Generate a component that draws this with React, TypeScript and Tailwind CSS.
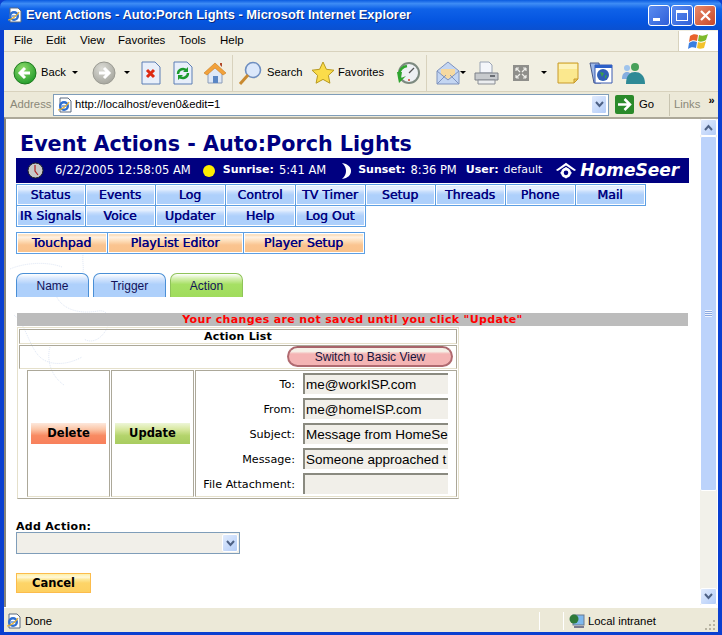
import type { ReactNode } from "react";

const row1 = ["Status", "Events", "Log", "Control", "TV Timer", "Setup", "Threads", "Phone", "Mail"];
const row2 = ["IR Signals", "Voice", "Updater", "Help", "Log Out"];

const fields = [
  { label: "To:", value: "me@workISP.com" },
  { label: "From:", value: "me@homeISP.com" },
  { label: "Subject:", value: "Message from HomeSe" },
  { label: "Message:", value: "Someone approached t" },
  { label: "File Attachment:", value: "" },
];

function IeIcon({ size = 16 }: { size?: number }) {
  return (
    <svg width={size} height={size} viewBox="0 0 16 16" className="shrink-0">
      <path d="M3 1h8l3 3v11H3z" fill="#fff" stroke="#5a6a80" />
      <circle cx="7" cy="9" r="5" fill="#2f6fd0" />
      <circle cx="7" cy="9" r="2.6" fill="#fff" />
      <path d="M4.500 9h5" stroke="#2f6fd0" strokeWidth="1.2" />
      <path d="M1 13c3 0 9-4 11-8" stroke="#e8b030" strokeWidth="1.2" fill="none" />
    </svg>
  );
}

function Caret({ className = "" }: { className?: string }) {
  return <span className={`block shrink-0 w-0 h-0 border-x-[3px] border-x-transparent border-t-[3px] border-t-black ${className}`} />;
}

function RoundArrow({ dir, on }: { dir: "left" | "right"; on: boolean }) {
  const d = dir === "left" ? "M17 12H8M12 7l-5 5 5 5" : "M7 12h9M12 7l5 5-5 5";
  return (
    <svg width="24" height="24" viewBox="0 0 24 24" className="shrink-0">
      <defs>
        <radialGradient id={`ball-${dir}`} cx="40%" cy="30%" r="75%">
          <stop offset="0" stopColor={on ? "#8fdc6a" : "#dcdcd6"} />
          <stop offset="1" stopColor={on ? "#1f9a2a" : "#a4a49c"} />
        </radialGradient>
      </defs>
      <circle cx="12" cy="12" r="11" fill={`url(#ball-${dir})`} stroke={on ? "#1d7a1d" : "#9a9a92"} />
      <path d={d} stroke="#fff" strokeWidth="3" fill="none" />
    </svg>
  );
}

function Stop() {
  return (
    <svg width="20" height="24" viewBox="0 0 20 24" className="shrink-0">
      <path d="M1 1h13l5 5v17H1z" fill="#e8effa" stroke="#5d7fb5" />
      <path d="M6 9l7 7M13 9l-7 7" stroke="#dd2a12" strokeWidth="3" />
    </svg>
  );
}

function Refresh() {
  return (
    <svg width="20" height="24" viewBox="0 0 20 24" className="shrink-0">
      <path d="M1 1h13l5 5v17H1z" fill="#e8effa" stroke="#5d7fb5" />
      <path d="M5 13a5 5 0 0 1 9-3M15 12a5 5 0 0 1-9 3" stroke="#1c9b2e" strokeWidth="2.4" fill="none" />
      <path d="M15 6v5h-5zM5 19v-5h5z" fill="#1c9b2e" />
    </svg>
  );
}

function Home() {
  return (
    <svg width="24" height="24" viewBox="0 0 24 24" className="shrink-0">
      <path d="M5 11l7-7 7 7v11H5z" fill="#dfe8f6" stroke="#8a9cb8" />
      <path d="M1 12L12 2l11 10-3 2-8-7-8 7z" fill="#f2a23a" stroke="#c67a20" strokeWidth=".6" />
      <path d="M10 15h5v7h-5z" fill="#5a86c4" />
      <path d="M17 2h2v4l-2-2z" fill="#b04a2a" />
    </svg>
  );
}

function SearchIcon() {
  return (
    <svg width="24" height="26" viewBox="0 0 24 26" className="shrink-0">
      <circle cx="15" cy="10" r="7.500" fill="#dbe8fb" stroke="#6f8fc0" strokeWidth="1.6" />
      <path d="M10 15L2 24" stroke="#c98a30" strokeWidth="3" />
    </svg>
  );
}

function Star() {
  return (
    <svg width="24" height="24" viewBox="0 0 24 24" className="shrink-0">
      <path d="M12 1l3.400 7.300 7.600.9-5.600 5.200 1.500 7.800L12 18.400 5.100 22.200l1.500-7.800L1 9.200l7.600-.9z" fill="#fbdc4a" stroke="#b89a20" />
    </svg>
  );
}

function History() {
  return (
    <svg width="24" height="24" viewBox="0 0 24 24" className="shrink-0">
      <circle cx="13" cy="12" r="10" fill="#eef1f4" stroke="#7d8a80" strokeWidth="2" />
      <path d="M13 12l5-5" stroke="#555" strokeWidth="1.200" />
      <circle cx="13" cy="19" r="1" fill="#d0402a" />
      <path d="M1 11h5l-1 6 5-2-7 7-1-5z" fill="#2fa52f" />
      <path d="M3 13a10 10 0 0 1 8-8" stroke="#2fa52f" strokeWidth="2.500" fill="none" />
    </svg>
  );
}

function Mail() {
  return (
    <svg width="24" height="24" viewBox="0 0 24 24" className="shrink-0">
      <path d="M1 10L12 1l11 9v13H1z" fill="#c4d6f2" stroke="#7f93be" />
      <path d="M5 8h14v6l-7 4-7-4z" fill="#f6d9a0" />
      <path d="M1 23l9-9M23 23l-9-9M1 10l11 9 11-9" stroke="#7f93be" fill="none" />
    </svg>
  );
}

function Printer() {
  return (
    <svg width="25" height="24" viewBox="0 0 25 24" className="shrink-0">
      <path d="M6 1h9l3 3v8H6z" fill="#f4f6fa" stroke="#9aa4b4" />
      <path d="M1 12h23v7H1z" fill="#c7cacd" stroke="#7c8088" />
      <path d="M4 19h17v4H4z" fill="#eceef0" stroke="#8a8e94" />
      <path d="M16 15h5" stroke="#4a4e54" strokeWidth="1.500" />
    </svg>
  );
}

function Media() {
  return (
    <svg width="16" height="16" viewBox="0 0 16 16" className="shrink-0">
      <path d="M0 0h16v16H0z" fill="#8f8f8b" />
      <path d="M3 3l4 4M13 3L9 7M3 13l4-4M13 13L9 9M3 3h3M3 3v3M13 3h-3M13 3v3M3 13h3M3 13v-3M13 13h-3M13 13v-3" stroke="#eeeeea" strokeWidth="1.200" fill="none" />
    </svg>
  );
}

function Note() {
  return (
    <svg width="22" height="22" viewBox="0 0 22 22" className="shrink-0">
      <path d="M1 1h20v16l-4 4H1z" fill="#fbe88e" stroke="#c89a2a" />
      <path d="M2 2h18v5H2z" fill="#fdf3ba" />
      <path d="M21 17h-4v4z" fill="#e8c860" stroke="#c89a2a" />
    </svg>
  );
}

function Windows() {
  return (
    <svg width="24" height="24" viewBox="0 0 24 24" className="shrink-0">
      <path d="M1 2h9l2 20H5z" fill="#9db8e8" stroke="#4a5a8a" />
      <path d="M6 4h17v18H6z" fill="#fff" stroke="#3a5ab0" />
      <path d="M6 4h17v3H6z" fill="#2c60c8" />
      <circle cx="14" cy="14" r="6" fill="#2f5fb5" />
      <path d="M11 11l4 1-2 4zM16 14l2 1-2 3z" fill="#3aa04a" />
    </svg>
  );
}

function Msn() {
  return (
    <svg width="26" height="24" viewBox="0 0 26 24" className="shrink-0">
      <circle cx="7" cy="7" r="3" fill="#9fc4ec" />
      <path d="M2 18c0-5 2-7 5-7s5 2 5 7z" fill="#86aee0" />
      <circle cx="15" cy="6" r="4" fill="#48a05a" />
      <path d="M6 23c0-9 4-12 9-12s10 3 10 12z" fill="#2f8a96" />
    </svg>
  );
}

function XpFlag() {
  return (
    <svg width="22" height="20" viewBox="0 0 22 20">
      <path d="M2 5c3-2 5-2 8-1l-1 6c-3-1-5-1-8 1z" fill="#e8622a" />
      <path d="M11 4c3 1 5 1 9-1l-2 6c-3 2-6 2-8 1z" fill="#7fba2a" />
      <path d="M1 12c3-2 5-2 8-1l-1 6c-3-1-5-1-8 1z" fill="#3a7ee0" />
      <path d="M10 11c3 1 5 1 8-1l-2 7c-3 1-5 1-7 0z" fill="#f4c22a" />
    </svg>
  );
}

function ScrollArrow({ up = false, className = "" }: { up?: boolean; className?: string }) {
  return (
    <div className={`flex shrink-0 items-center justify-center rounded-[2px] border border-white bg-[linear-gradient(135deg,#e1ebfd,#b4cdf8)] ${className}`}>
      <svg width="9" height="7" viewBox="0 0 9 7">
        <path d={up ? "M1 6l3.500-4 3.500 4" : "M1 1l3.500 4 3.500-4"} stroke="#4d6185" strokeWidth="2" fill="none" />
      </svg>
    </div>
  );
}

function NavButton({ label, orange = false, w = "w-[71px] first:w-[70px]" }: { label: string; orange?: boolean; w?: string }) {
  const skin = orange
    ? "bg-[linear-gradient(#fbe2c4_0%,#fbe2c4_14%,#fff3e6_20%,#fdddb8_40%,#fac490_60%,#fac28a_100%)]"
    : "bg-[linear-gradient(#dbe9fd_0%,#e8f1fe_20%,#c4dcfc_35%,#aed0fb_50%,#aed0fb_100%)]";
  return (
    <div className={`${w} h-[22px] shrink-0 -ml-px first:ml-0 pr-px border border-[#5d9fe3] ${skin} shadow-[inset_0_0_0_1px_#fff] flex items-center justify-center font-['DejaVu_Sans'] text-[12.500px] text-[#000080] [text-shadow:0.4px_0_0_#000080] whitespace-nowrap`}>
      {label}
    </div>
  );
}

function Tab({ label, active = false }: { label: string; active?: boolean }) {
  const skin = active
    ? "border-[#8fc35a] bg-[linear-gradient(#fff_0%,#d4efae_20%,#a6e064_45%,#a0dc5c_100%)]"
    : "border-[#4a8fd6] bg-[linear-gradient(#fff_0%,#d6e6fd_20%,#aed0fb_45%,#aed0fb_100%)]";
  return (
    <div className={`w-[73px] h-[24px] rounded-t-[7px] border-x border-t ${skin} flex items-center justify-center font-['Liberation_Sans'] text-[12px] text-[#12125a]`}>
      {label}
    </div>
  );
}

function ActionButton({ label, className }: { label: string; className: string }) {
  return (
    <div className={`h-[21px] flex items-center justify-center font-['DejaVu_Sans'] text-[11.500px] font-bold text-black ${className}`}>
      {label}
    </div>
  );
}

function Cell({ children, className = "" }: { children: ReactNode; className?: string }) {
  return <div className={`border border-[#aca899] border-b-[#e5e0cb] ${className}`}>{children}</div>;
}

// faint dotted wallpaper behind the page
function Watermark() {
  return (
    <svg width="130" height="150" viewBox="0 0 130 150" className="absolute left-0 top-[132px]" fill="none" stroke="#dfe7f5" strokeWidth="1" strokeDasharray="1 1">
      <path d="M4 18c14-6 36-8 52-2" />
      <path d="M78 0c-4 10 4 22 -6 30-8 6-18 4-24-2" />
      <path d="M50 44c4 12 20 20 42 16 12-2 14 12 6 22-6 8-14 10-20 6" />
      <path d="M8 64c12 10 14 28 24 40 10 12 30 10 44 2" />
      <path d="M44 96c-4 14 2 30 14 38" />
    </svg>
  );
}

export default function App() {
  return (
    <div className="w-[722px] h-[635px] overflow-hidden flex flex-col bg-[#0a3fd0] font-['Liberation_Sans',sans-serif]">
      {/* title bar */}
      <div className="h-[30px] shrink-0 flex items-center pl-[7px] pr-[6px] rounded-t-[7px] bg-[linear-gradient(#0a5be0_0%,#3e8cf5_12%,#0f62e8_30%,#0555e0_70%,#0a50d0_100%)]">
        <IeIcon />
        <span className="ml-[3px] font-['Liberation_Sans'] font-bold text-[12.900px] text-white [text-shadow:1px_1px_0_#0a2a80] whitespace-nowrap">
          Event Actions - Auto:Porch Lights - Microsoft Internet Explorer
        </span>
        <div className="ml-auto flex gap-px">
          <div className="w-[22px] h-[21px] rounded-[3px] border border-white bg-[linear-gradient(135deg,#5a8cf0,#2f5fd8)] flex items-end p-[4px]">
            <span className="block w-[7px] h-[3px] bg-white" />
          </div>
          <div className="w-[22px] h-[21px] rounded-[3px] border border-white bg-[linear-gradient(135deg,#5a8cf0,#2f5fd8)] p-[4px]">
            <span className="block w-full h-full border border-white border-t-[3px]" />
          </div>
          <div className="w-[22px] h-[21px] rounded-[3px] border border-white bg-[linear-gradient(135deg,#e88a6a,#c8482a)] flex items-center justify-center">
            <svg width="13" height="13" viewBox="0 0 13 13">
              <path d="M2 2l9 9M11 2l-9 9" stroke="#fff" strokeWidth="2.200" />
            </svg>
          </div>
        </div>
      </div>

      <div className="flex-1 flex flex-col mx-[4px] bg-[#ece9d8] min-h-0">
        {/* menu */}
        <div className="h-[22px] shrink-0 flex items-center pt-px border-b border-[#d8d2bd] text-[11.500px] text-black bg-[#f1efe2]">
          <span className="ml-[10px] w-[32px]">File</span>
          <span className="w-[34px]">Edit</span>
          <span className="w-[38px]">View</span>
          <span className="w-[61px]">Favorites</span>
          <span className="w-[41px]">Tools</span>
          <span>Help</span>
          <div className="ml-auto h-full w-[40px] bg-white flex items-center justify-center border-l border-[#d8d2bd]">
            <XpFlag />
          </div>
        </div>

        {/* toolbar */}
        <div className="h-[40px] shrink-0 flex items-center pt-[2px] border-b border-[#d8d2bd] bg-[#f1efe2] text-[11.200px] text-black">
          <div className="ml-[9px]"><RoundArrow dir="left" on /></div>
          <span className="ml-[4px] w-[22px]">Back</span>
          <Caret className="ml-[9px]" />
          <div className="ml-[14px]"><RoundArrow dir="right" on={false} /></div>
          <Caret className="ml-[8px] border-t-[#a8a8a0]" />
          <div className="ml-[11px]"><Stop /></div>
          <div className="ml-[12px]"><Refresh /></div>
          <div className="ml-[10px]"><Home /></div>
          <div className="ml-[5px] w-px h-[36px] bg-[#d8d2bd]" />
          <div className="ml-[5px]"><SearchIcon /></div>
          <span className="ml-[5px] w-[33px]">Search</span>
          <div className="ml-[11px]"><Star /></div>
          <span className="ml-[3px] w-[46px] whitespace-nowrap">Favorites</span>
          <div className="ml-[12px]"><History /></div>
          <div className="ml-[6px] w-px h-[36px] bg-[#d8d2bd]" />
          <div className="ml-[9px]"><Mail /></div>
          <Caret />
          <div className="ml-[8px]"><Printer /></div>
          <div className="ml-[14px]"><Media /></div>
          <Caret className="ml-[12px]" />
          <div className="ml-[10px]"><Note /></div>
          <div className="ml-[10px]"><Windows /></div>
          <div className="ml-[7px]"><Msn /></div>
        </div>

        {/* address */}
        <div className="h-[25px] shrink-0 flex items-center bg-[#ece9d8] text-[11.300px]">
          <span className="ml-[6px] w-[43px] text-[#8a8878]">Address</span>
          <div className="w-[556px] h-[22px] border border-[#7f9db9] bg-white flex items-center pl-[3px] pr-[1px]">
            <IeIcon />
            <span className="ml-[2px] text-black">http://localhost/even0&amp;edit=1</span>
            <ScrollArrow className="ml-auto w-[16px] h-[19px]" />
          </div>
          <svg width="19" height="19" viewBox="0 0 19 19" className="ml-[6px]">
            <rect width="19" height="19" rx="2" fill="#2a8a2a" />
            <path d="M3 9.500h11M9.500 4l5.500 5.500L9.500 15" stroke="#fff" strokeWidth="2.500" fill="none" />
          </svg>
          <span className="ml-[5px] w-[30px]">Go</span>
          <div className="w-px h-[22px] bg-[#c8c4b0]" />
          <span className="ml-[4px] text-[#8a8878]">Links</span>
          <span className="ml-[8px] -mt-[8px] font-bold text-[11px] text-black">»</span>
        </div>

        {/* page + scrollbar */}
        <div className="flex-1 min-h-0 flex border-l-2 border-t-2 border-[#87847a] border-t-[#aca899] bg-white">
          <div className="relative flex-1 min-w-0 pl-[10px] font-['DejaVu_Sans',sans-serif]">
            <Watermark />
            <div className="relative">
              <h1 className="mt-[12px] ml-[4px] h-[27px] leading-[27px] text-[20.700px] font-bold text-[#000080] whitespace-nowrap">
                Event Actions - Auto:Porch Lights
              </h1>

              <div className="w-[673px] h-[25px] bg-[#000080] flex items-center text-[11.500px] text-white whitespace-nowrap">
                <svg width="17" height="17" viewBox="0 0 17 17" className="ml-[11px]">
                  <circle cx="8.500" cy="8.500" r="7.500" fill="#c8c8c8" stroke="#222" />
                  <path d="M8 3v6l3 4" stroke="#b02020" strokeWidth="1.200" fill="none" />
                </svg>
                <span className="ml-[11px]">6/22/2005 12:58:05 AM</span>
                <span className="ml-[12px] w-[12px] h-[12px] rounded-full bg-[#ffef00]" />
                <span className="ml-[8px] text-[11px] font-bold">Sunrise:</span>
                <span className="ml-[5px]">5:41 AM</span>
                <svg width="12" height="16" viewBox="0 0 12 16" className="ml-[14px]">
                  <path d="M2 0c6 1 9 4 9 8s-3 7-9 8c3-3 4-5 4-8S5 3 2 0z" fill="#fff" />
                </svg>
                <span className="ml-[6px] text-[11px] font-bold">Sunset:</span>
                <span className="ml-[5px]">8:36 PM</span>
                <span className="ml-[9px] text-[11px] font-bold">User:</span>
                <span className="ml-[5px] text-[11px]">default</span>
                <svg width="22" height="20" viewBox="0 0 24 20" className="ml-[13px]">
                  <path d="M1 9l11-8 11 8-2 1-9-6-9 6z" fill="#fff" />
                  <circle cx="12" cy="12" r="4" fill="none" stroke="#fff" strokeWidth="3" />
                  <path d="M12 6v2M12 16v2M6 12h2M16 12h2" stroke="#fff" strokeWidth="2" />
                </svg>
                <span className="ml-[3px] text-[17px] font-bold italic">HomeSeer</span>
              </div>

              <div className="mt-px flex flex-col">
                <div className="flex">
                  {row1.map((b) => (
                    <NavButton key={b} label={b} />
                  ))}
                </div>
                <div className="flex -mt-px">
                  {row2.map((b) => (
                    <NavButton key={b} label={b} />
                  ))}
                </div>
                <div className="flex mt-[5px]">
                  <NavButton label="Touchpad" orange w="w-[92px]" />
                  <NavButton label="PlayList Editor" orange w="w-[137px]" />
                  <NavButton label="Player Setup" orange w="w-[122px]" />
                </div>
              </div>

              <div className="mt-[19px] flex gap-[4px]">
                <Tab label="Name" />
                <Tab label="Trigger" />
                <Tab label="Action" active />
              </div>

              <div className="mt-[16px] ml-px pt-px w-[671px] h-[13px] bg-[#bcbcbc] flex items-center justify-center text-[11px] font-bold text-[#ff0000] tracking-[0.35px] whitespace-nowrap">
                Your changes are not saved until you click "Update"
              </div>

              {/* action table */}
              <div className="mt-px ml-px w-[442px] h-[172px] border border-[#e5e0cb] border-b-[#aca899] p-px flex flex-col">
                <Cell className="h-[15px] pt-[2px] flex items-center justify-center text-[11px] font-bold text-black tracking-[0.2px]">
                  Action List
                </Cell>
                <Cell className="mt-px h-[24px] flex items-start justify-end pr-[3px]">
                  <div className="w-[166px] h-[21px] rounded-full border-2 border-[#b06a70] border-t-[#a8646a] bg-[linear-gradient(#f6f0e8_0%,#f6f0e8_20%,#f4b4b4_35%,#f4b4b4_100%)] flex items-center justify-center font-['Liberation_Sans'] text-[12px] text-[#14143c]">
                    Switch to Basic View
                  </div>
                </Cell>
                <div className="mt-px flex-1 flex gap-px pl-[8px]">
                  <Cell className="w-[83px] flex items-center justify-center">
                    <ActionButton label="Delete" className="w-[75px] bg-[linear-gradient(#fde8dc_0%,#fbc6a8_30%,#f88a62_60%,#f8805c_100%)]" />
                  </Cell>
                  <Cell className="w-[83px] flex items-center justify-center">
                    <ActionButton label="Update" className="w-[75px] bg-[linear-gradient(#eef6d8_0%,#d8e8a0_30%,#b4d46c_60%,#a8cc60_100%)]" />
                  </Cell>
                  <Cell className="flex-1 pt-[2px] flex flex-col gap-[4px] text-[11.200px] text-black">
                    {fields.map((f) => (
                      <div key={f.label} className="flex items-center h-[21px]">
                        <span className="w-[99px] pt-[3px] text-right whitespace-nowrap">{f.label}</span>
                        <div className="ml-[8px] w-[145px] h-[21px] overflow-hidden whitespace-nowrap bg-[#f1efe9] border-l-2 border-t-2 border-[#8a8a80] pl-[1px] font-['Liberation_Sans'] text-[13.500px] leading-[20px]">
                          {f.value}
                        </div>
                      </div>
                    ))}
                  </Cell>
                </div>
              </div>

              <div className="mt-[22px] h-[11px] leading-[11px] text-[11px] font-bold text-black tracking-[0.3px]">Add Action:</div>
              <div className="w-[224px] h-[22px] border border-[#7f9db9] bg-[#f1efe9] flex justify-end p-px">
                <ScrollArrow className="w-[16px] h-[18px]" />
              </div>

              <div className="mt-[19px] pt-px w-[75px] h-[20px] border border-[#fcbc4c] bg-[linear-gradient(#fdf0a8_0%,#fff8d8_18%,#fde898_30%,#fdd468_50%,#fdd060_100%)] flex items-center justify-center text-[11.500px] font-bold text-black">
                Cancel
              </div>
            </div>
          </div>

          <div className="w-[17px] shrink-0 mr-[1px] mb-[2px] flex flex-col bg-[#f2f1ea]">
            <ScrollArrow up className="w-[17px] h-[17px]" />
            <div className="flex-1 rounded-[2px] border border-white bg-[#bcd3fb] flex items-center justify-center mb-[97px]">
              <span className="w-[7px] h-[7px] bg-[repeating-linear-gradient(#eef3fe_0,#eef3fe_1px,#8aa8e0_1px,#8aa8e0_2px)]" />
            </div>
            <ScrollArrow className="w-[17px] h-[17px]" />
          </div>
        </div>

        {/* status bar */}
        <div className="h-[25px] shrink-0 flex items-center pt-[2px] border-t border-[#fff] bg-[#ece9d8] text-[11.300px] text-black">
          <div className="ml-[2px]"><IeIcon /></div>
          <span className="ml-[3px]">Done</span>
          <div className="ml-auto w-px h-[18px] bg-white" />
          <div className="ml-[23px] w-px h-[18px] bg-white" />
          <svg width="16" height="16" viewBox="0 0 16 16" className="ml-[5px]">
            <rect x="4" y="2" width="11" height="10" fill="#7eb8ee" stroke="#6a7a90" />
            <circle cx="5" cy="6" r="4.500" fill="#2f7a3a" />
            <path d="M5 14h10" stroke="#7a7a90" strokeWidth="2" />
          </svg>
          <span className="ml-[3px] w-[116px]">Local intranet</span>
          <svg width="12" height="12" viewBox="0 0 12 12" className="self-end mb-px mr-[2px]">
            <path d="M9 1h2v2H9zM5 5h2v2H5zM9 5h2v2H9zM1 9h2v2H1zM5 9h2v2H5zM9 9h2v2H9z" fill="#b8b4a2" />
          </svg>
        </div>
      </div>
      <div className="h-[3px] shrink-0" />
    </div>
  );
}
